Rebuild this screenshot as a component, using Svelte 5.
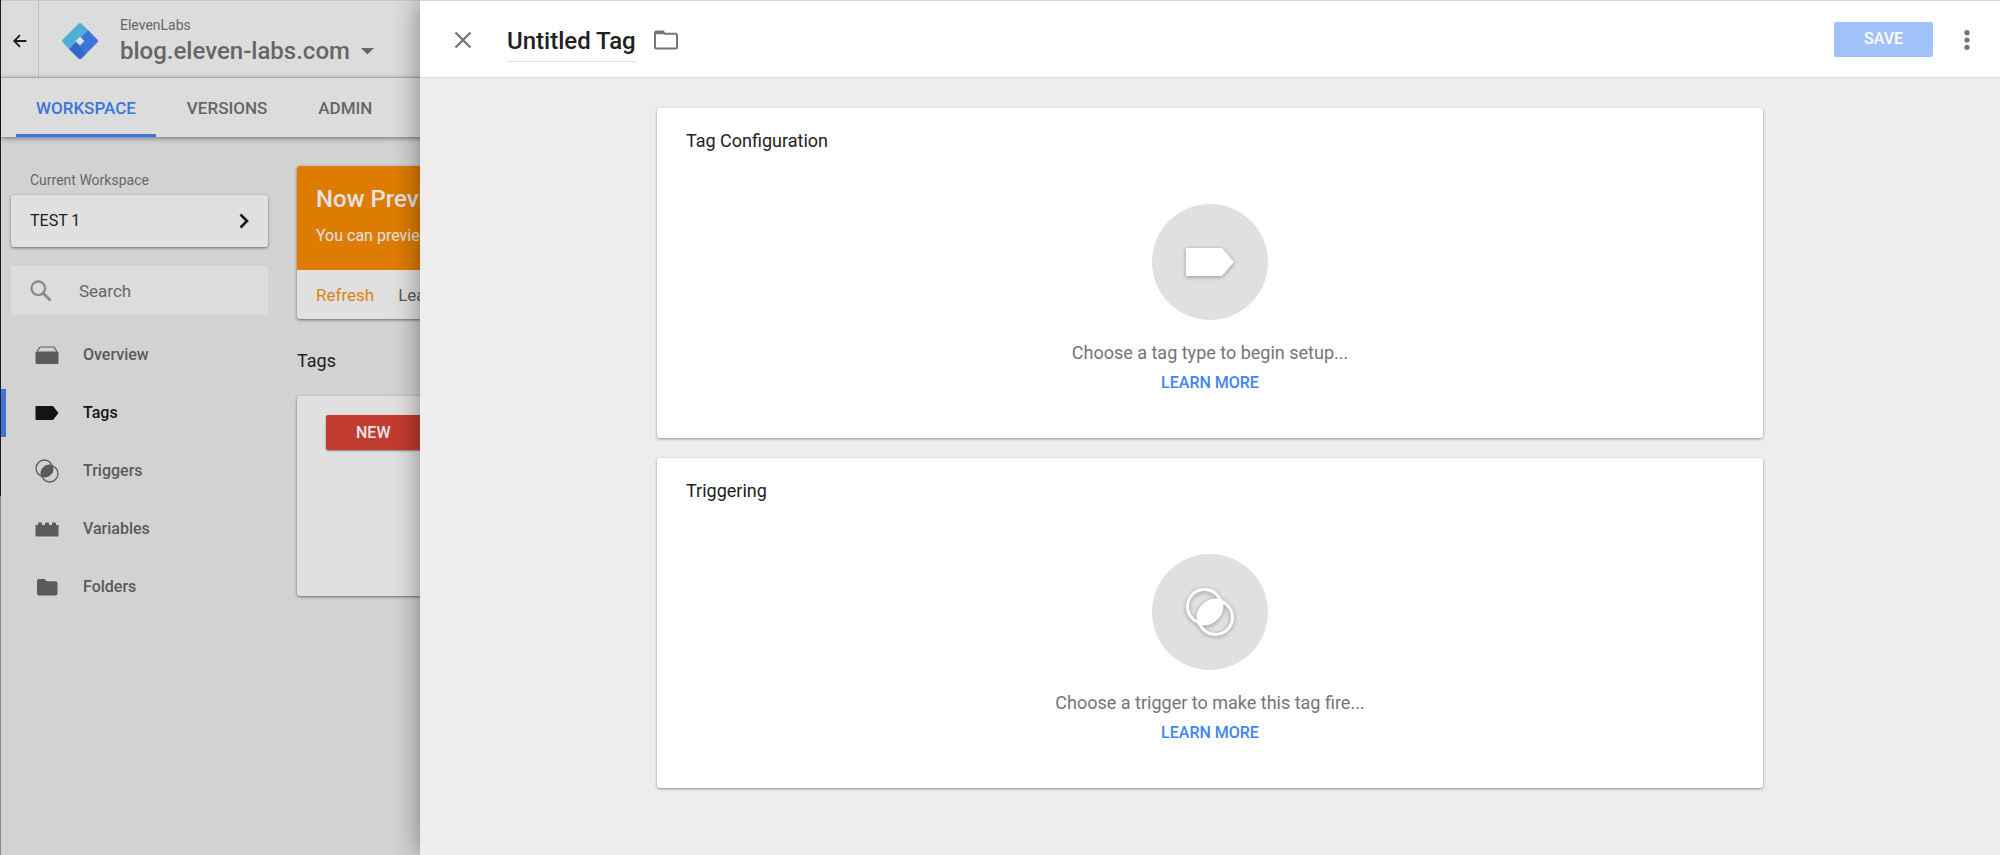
<script>
  const tabs = ['WORKSPACE', 'VERSIONS', 'ADMIN'];
  const nav = ['Overview', 'Tags', 'Triggers', 'Variables', 'Folders'];
  const cards = [
    { title: 'Tag Configuration', hint: 'Choose a tag type to begin setup...', icon: 'tag' },
    { title: 'Triggering', hint: 'Choose a trigger to make this tag fire...', icon: 'trigger' }
  ];
  let activeTab = $state('WORKSPACE');
  let activeNav = $state('Tags');
  let query = $state('');
</script>

<div class="page">
  <div class="app">
    <header class="topbar">
      <button class="back" aria-label="Back">
        <svg width="14" height="14" viewBox="0 0 14 14"><path d="M13.3 7H1.5M7 1.2L1.2 7L7 12.8" fill="none" stroke="#1a1a1a" stroke-width="1.8" /></svg>
      </button>
      <svg class="logo" width="38" height="38" viewBox="0 0 38 38">
        <path d="M17.4 1.7a2.3 2.3 0 0 1 3.2 0L27 8.1 8.1 27 1.7 20.6a2.3 2.3 0 0 1 0-3.200z" fill="#50aed6" />
        <path d="M27 8.1l9.300 9.300a2.300 2.300 0 0 1 0 3.200L20.600 36.300a2.300 2.300 0 0 1-3.200 0L8.100 27z" fill="#3b74dc" />
        <path d="M14 21.100L19 25.500 25.200 31.700 20.600 36.300a2.300 2.300 0 0 1-3.200 0L8.100 27z" fill="#3567ca" />
        <path d="M19 14.600l4.400 4.400-4.400 4.400-4.400-4.400z" fill="#e0e0e0" />
      </svg>
      <div class="account">
        <span class="org">ElevenLabs</span>
        <button class="container-name">blog.eleven-labs.com
          <svg width="13" height="7" viewBox="0 0 13 7"><path d="M0 0h13L6.500 6.500z" fill="#666" /></svg>
        </button>
      </div>
    </header>

    <nav class="tabs" aria-label="Sections">
      {#each tabs as tab}
        <button class:active={activeTab === tab} onclick={() => (activeTab = tab)}>{tab}</button>
      {/each}
    </nav>

    <div class="body">
      <aside>
        <span class="caption">Current Workspace</span>
        <button class="workspace">TEST 1
          <svg width="10" height="16" viewBox="0 0 10 16"><path d="M1.500 1.500L8 8l-6.500 6.500" fill="none" stroke="#1a1a1a" stroke-width="2.600" /></svg>
        </button>
        <label class="search">
          <svg width="22" height="22" viewBox="0 0 22 22"><circle cx="8.300" cy="8.300" r="6.800" fill="none" stroke="#8b8b8b" stroke-width="2.400" /><path d="M13.200 13.200l7.300 7.300" stroke="#8b8b8b" stroke-width="2.900" /></svg>
          <input type="text" placeholder="Search" aria-label="Search" bind:value={query} />
        </label>
        <ul>
          {#each nav as item}
            <li>
              <button class:active={activeNav === item} onclick={() => (activeNav = item)}>
                <svg width="24" height="24" viewBox="0 0 24 24" fill="currentColor">
                  {#if item === 'Overview'}
                    <path d="M2 8.500L5.200 4h13.600L22 8.500" fill="none" stroke="currentColor" stroke-width="1.200" />
                    <path d="M2 8.500h20a1.500 1.500 0 0 1 1.500 1.500v9.500a1.500 1.500 0 0 1-1.500 1.500h-20a1.500 1.500 0 0 1-1.500-1.500V10A1.500 1.500 0 0 1 2 8.500z" />
                  {:else if item === 'Tags'}
                    <path d="M1.500 5H18l5.500 7L18 19H1.500a1 1 0 0 1-1-1V6a1 1 0 0 1 1-1z" />
                  {:else if item === 'Triggers'}
                    <circle cx="9.300" cy="9.300" r="8.300" fill="none" stroke="currentColor" stroke-width="1.300" />
                    <circle cx="14.700" cy="14.700" r="8.300" fill="none" stroke="currentColor" stroke-width="1.300" />
                    <path d="M17.600 6.400a8.500 8.500 0 0 1-11.200 11.200A8.500 8.500 0 0 1 17.600 6.400z" />
                  {:else if item === 'Variables'}
                    <path d="M.500 8h2.500V6.500a1 1 0 0 1 1-1h2a1 1 0 0 1 1 1V8h3V6.500a1 1 0 0 1 1-1h2a1 1 0 0 1 1 1V8h3V6.500a1 1 0 0 1 1-1h2a1 1 0 0 1 1 1V8h2.500v11.500H.500z" />
                  {:else}
                    <path d="M4 4h5.500l2.300 2.200H20.500a2 2 0 0 1 2 2v10.300a2 2 0 0 1-2 2H4a2 2 0 0 1-2-2V6a2 2 0 0 1 2-2z" />
                  {/if}
                </svg>
                {item}
              </button>
            </li>
          {/each}
        </ul>
      </aside>

      <main>
        <section class="sheet preview">
          <div class="banner">
            <h2>Now Previewing Workspace</h2>
            <p>You can preview this workspace in your browser</p>
          </div>
          <div class="actions"><a href="#refresh">Refresh</a><a href="#leave" class="muted">Leave Preview Mode</a></div>
        </section>
        <h3>Tags</h3>
        <section class="sheet list"><button class="new">NEW</button></section>
      </main>
    </div>
  </div>

  <div class="drawer" role="dialog" aria-labelledby="tag-title">
    <header class="drawer-bar">
      <button class="icon" aria-label="Close">
        <svg width="18" height="18" viewBox="0 0 18 18"><path d="M1.500 1.500l15 15M16.500 1.500l-15 15" stroke="#757575" stroke-width="2.300" /></svg>
      </button>
      <h1 id="tag-title">Untitled Tag</h1>
      <button class="icon" aria-label="Move to folder">
        <svg width="26" height="20" viewBox="0 0 26 20"><path d="M3.500 1.500H10l2 2.300H22.500a1.500 1.500 0 0 1 1.500 1.500V17a1.500 1.500 0 0 1-1.500 1.500h-19A1.500 1.500 0 0 1 2 17V3a1.500 1.500 0 0 1 1.500-1.500z" fill="none" stroke="#757575" stroke-width="2" /><path d="M2 1.500h8l2 2.800H2z" fill="#757575" /></svg>
      </button>
      <button class="save">SAVE</button>
      <button class="icon" aria-label="More options">
        <svg width="6" height="20" viewBox="0 0 6 20" fill="#757575"><circle cx="3" cy="2.700" r="2.600" /><circle cx="3" cy="10" r="2.600" /><circle cx="3" cy="17.300" r="2.600" /></svg>
      </button>
    </header>

    <div class="cards">
      {#each cards as card}
        <section class="card">
          <h2>{card.title}</h2>
          <div class="choose">
            <span class="disc">
              <svg width="48" height="48" viewBox="0 0 48 48" fill="#fff">
                {#if card.icon === 'tag'}
                  <path d="M0 10h36l12 14-12 14H0z" />
                {:else}
                  <circle cx="18.500" cy="18.500" r="17" fill="none" stroke="#fff" stroke-width="3" />
                  <circle cx="29.500" cy="29.500" r="17" fill="none" stroke="#fff" stroke-width="3" />
                  <path d="M36.500 11.500A20 20 0 0 1 11.500 36.500 20 20 0 0 1 36.500 11.500z" />
                {/if}
              </svg>
            </span>
            <p>{card.hint}</p>
            <a href="#learn">LEARN MORE</a>
          </div>
        </section>
      {/each}
    </div>
  </div>
</div>

<style>
  :global(body) { margin: 0; background: #d2d2d2; }
  .page {
    position: relative;
    min-height: 100vh;
    overflow: hidden;
    font-family: Roboto, sans-serif;
    font-size: 16px;
    line-height: 20px;
    color: #212121;
    background: #d2d2d2;
  }
  button { font: inherit; color: inherit; background: none; border: 0; padding: 0; cursor: pointer; }
  h1, h2, h3, p, ul { margin: 0; padding: 0; font-weight: 400; }
  a { text-decoration: none; }
  svg { display: block; flex: none; }

  .app {
    min-height: 100vh;
    box-sizing: border-box;
    border-left: 1px solid;
    border-image: linear-gradient(#1b1b1b 58%, #8a8a8a 58%) 1;
  }
  .topbar { display: flex; align-items: center; height: 76px; border-top: 1px solid #c8c8c8; border-bottom: 1px solid #c3c3c3; background: #dcdcdc; }
  .back { display: flex; align-items: center; justify-content: center; width: 38px; height: 100%; padding-top: 4px; box-sizing: border-box; border-right: 1px solid #bdbdbd; }
  .logo { margin: 4px 21px 0 22px; }
  .account { display: flex; flex-direction: column; align-items: flex-start; padding-top: 4px; color: #666; }
  .org { font-size: 14px; }
  .container-name { display: flex; align-items: center; gap: 11px; font-size: 24px; line-height: 32px; font-weight: 500; }

  .tabs { position: relative; display: flex; gap: 11px; height: 59px; padding-left: 15px; background: #dcdcdc; box-shadow: 0 1px 5px rgba(0, 0, 0, 0.5); }
  .tabs button { padding: 3px 20px 0; border-bottom: 3px solid transparent; font-size: 17px; font-weight: 500; color: #666; }
  .tabs .active { color: #3b74dc; border-color: #3b74dc; }

  .body { display: flex; gap: 29px; }
  aside { flex: none; width: 267px; padding-top: 33px; }
  .caption { display: block; padding: 0 29px; margin-bottom: 5px; font-size: 14px; color: #666; }
  .workspace, .search { display: flex; align-items: center; box-sizing: border-box; width: 257px; margin-left: 10px; padding: 0 19px; border-radius: 3px; }
  .workspace { justify-content: space-between; height: 52px; background: #e0e0e0; box-shadow: 0 1px 3px rgba(0, 0, 0, 0.5); }
  .search { gap: 27px; height: 49px; margin-top: 19px; background: #dcdcdc; }
  .search input { width: 100%; min-width: 0; padding: 0; border: 0; outline: 0; background: none; font: inherit; font-size: 17px; color: #666; }
  .search input::placeholder { color: #666; opacity: 1; }
  aside ul { display: grid; gap: 10px; margin-top: 16px; list-style: none; }
  aside li button { display: flex; align-items: center; gap: 24px; width: 100%; height: 48px; padding-left: 29px; border-left: 5px solid transparent; font-weight: 500; color: #5a5a5a; }
  aside li .active { border-color: #3b74dc; color: #141414; }

  main { flex: 1; padding: 29px 24px 0 0; }
  .sheet { border-radius: 3px; background: #e0e0e0; box-shadow: 0 1px 3px rgba(0, 0, 0, 0.5); overflow: hidden; }
  .banner { box-sizing: border-box; height: 104px; padding: 19px; background: #dd7c00; color: #e3e3e3; }
  .banner h2 { font-size: 24px; line-height: 28px; font-weight: 500; margin-bottom: 13px; }
  .actions { display: flex; align-items: center; gap: 24px; height: 49px; padding: 0 19px; font-size: 17px; }
  .actions a { color: #dd8113; }
  .actions .muted { color: #5a5a5a; }
  h3 { margin: 32px 0 25px; font-size: 18px; }
  .list { box-sizing: border-box; height: 200px; padding: 19px 29px; }
  .new { height: 35px; padding: 0 30px; border-radius: 2px; background: #c23b30; color: #e8e8e8; font-weight: 500; width: 160px; text-align: left; box-shadow: 0 1px 2px rgba(0, 0, 0, 0.4); }

  /* The drawer slides over the workspace from the right */
  .drawer { position: absolute; top: 0; right: 0; bottom: 0; width: 79%; background: #ededed; box-shadow: 0 0 26px rgba(0, 0, 0, 0.42); }
  .drawer-bar { display: flex; align-items: center; height: 76px; padding: 0 30px 0 34px; border-top: 1px solid #d8d8d8; border-bottom: 1px solid #dedede; background: #fff; }
  .drawer-bar h1 { margin: 8px 17px 0 35px; padding-bottom: 4px; border-bottom: 1px solid #e0e0e0; font-size: 24px; line-height: 32px; font-weight: 500; }
  .drawer-bar .icon { padding-top: 2px; }
  .save { margin: 0 31px 0 auto; width: 99px; height: 35px; border-radius: 2px; background: #a1c2fb; color: #fff; font-weight: 500; }

  .cards { display: grid; gap: 20px; width: 70%; margin: 0 auto; padding: 30px 0; }
  .card { padding: 22px 29px 45px; border-radius: 3px; background: #fff; box-shadow: 0 1px 3px rgba(0, 0, 0, 0.4); }
  .card h2 { font-size: 18px; line-height: 22px; }
  .choose { display: flex; flex-direction: column; align-items: center; margin-top: 52px; }
  .disc { display: flex; align-items: center; justify-content: center; width: 116px; height: 116px; border-radius: 50%; background: #e0e0e0; }
  .disc svg { filter: drop-shadow(0 1px 2px rgba(0, 0, 0, 0.35)); overflow: visible; }
  .choose p { margin: 21px 0 8px; font-size: 18px; line-height: 24px; color: #757575; }
  .choose a { font-weight: 500; color: #4285f4; }
</style>
